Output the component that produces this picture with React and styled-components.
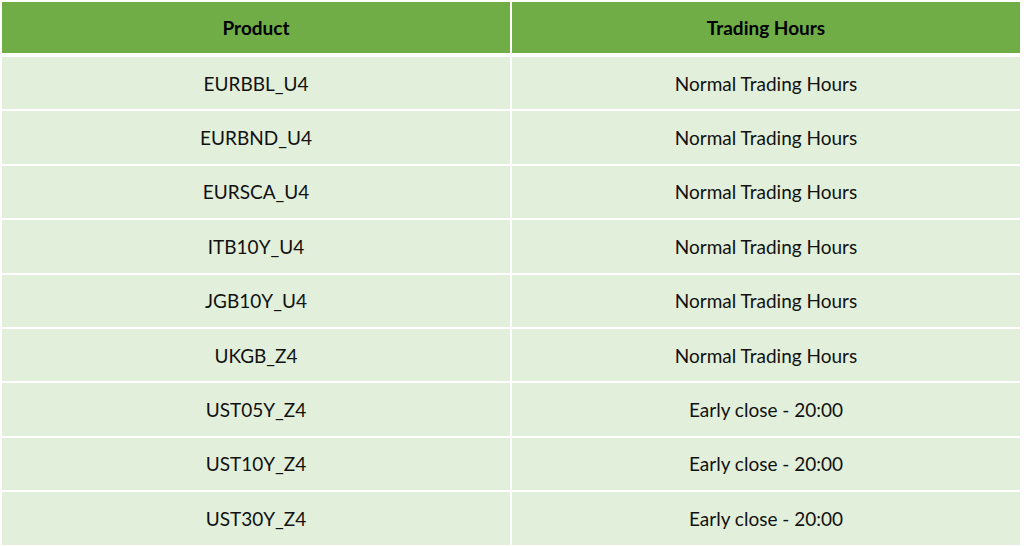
import React from "react";
import styled, { createGlobalStyle } from "styled-components";

const Global = createGlobalStyle`
  html, body { margin: 0; padding: 0; background: #ffffff; }
  body { font-family: Lato, "Open Sans", sans-serif; }
`;

const Page = styled.div`
  padding: 2px 4px 0 2px;
`;

const Table = styled.div`
  display: grid;
  grid-template-columns: 1fr 1fr;
  column-gap: 2px;
  row-gap: 2px;
`;

const HeadCell = styled.div`
  background: #70ad47;
  height: 51px;
  margin-bottom: 2px;
  display: flex;
  align-items: center;
  justify-content: center;
  font-weight: 700;
  font-size: 19px;
  color: #000;
`;

const Cell = styled.div`
  background: #e2efda;
  height: 52.4px;
  display: flex;
  align-items: center;
  justify-content: center;
  font-size: 19px;
  color: #111;
`;

const rows = [
  ["EURBBL_U4", "Normal Trading Hours"],
  ["EURBND_U4", "Normal Trading Hours"],
  ["EURSCA_U4", "Normal Trading Hours"],
  ["ITB10Y_U4", "Normal Trading Hours"],
  ["JGB10Y_U4", "Normal Trading Hours"],
  ["UKGB_Z4", "Normal Trading Hours"],
  ["UST05Y_Z4", "Early close - 20:00"],
  ["UST10Y_Z4", "Early close - 20:00"],
  ["UST30Y_Z4", "Early close - 20:00"],
];

export default function App() {
  return (
    <Page>
      <Global />
      <Table>
        <HeadCell>Product</HeadCell>
        <HeadCell>Trading Hours</HeadCell>
        {rows.map(([p, h]) => (
          <React.Fragment key={p}>
            <Cell>{p}</Cell>
            <Cell>{h}</Cell>
          </React.Fragment>
        ))}
      </Table>
    </Page>
  );
}
